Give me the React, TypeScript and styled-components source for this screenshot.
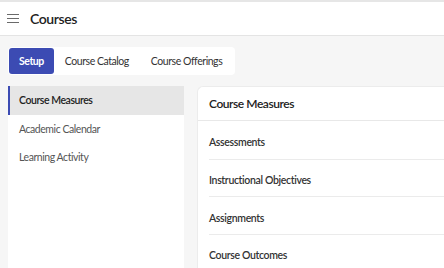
import React, { useState } from 'react'
import styled, { createGlobalStyle } from 'styled-components'

const GlobalStyle = createGlobalStyle`
  html, body {
    margin: 0;
    padding: 0;
    background: #f6f6f6;
    font-family: Lato, "Open Sans", Arial, sans-serif;
    color: #222;
    overflow: hidden;
  }
`

const Page = styled.div`
  width: 444px;
  height: 268px;
  display: flex;
  flex-direction: column;
  border-top: 2px solid #e6e6e6;
  box-sizing: border-box;
`

const Header = styled.header`
  height: 33px;
  flex: none;
  display: flex;
  align-items: center;
  gap: 11px;
  padding: 0 7px;
  background: #fff;
  border-bottom: 1px solid #e4e4e4;
`

const MenuIcon = styled.span`
  display: flex;
  flex-direction: column;
  justify-content: space-between;
  width: 12px;
  height: 10px;
  span {
    height: 1.3px;
    background: #6a6a6a;
  }
`

const Title = styled.h1`
  margin: 0;
  font-size: 14px;
  font-weight: 600;
  color: #222;
  letter-spacing: -0.4px;
`

const Body = styled.main`
  flex: 1;
  display: flex;
  flex-direction: column;
  padding: 11px 0 0 8px;
  gap: 11px;
  min-height: 0;
`

const TabBar = styled.nav`
  align-self: flex-start;
  display: flex;
  align-items: center;
  background: #fff;
  border-radius: 4px;
  padding: 1px 2px 1px 1px;
`

const Tab = styled.button<{ active?: boolean }>`
  border: none;
  font-family: inherit;
  font-size: 10.5px;
  letter-spacing: -0.45px;
  height: 26px;
  padding: 0 ${({ active }) => (active ? '10px' : '11px')};
  border-radius: 3px;
  cursor: pointer;
  background: ${({ active }) => (active ? '#3c4bb3' : 'transparent')};
  color: ${({ active }) => (active ? '#fff' : '#333')};
  font-weight: ${({ active }) => (active ? 700 : 400)};
`

const Columns = styled.div`
  flex: 1;
  display: flex;
  gap: 13px;
  min-height: 0;
`

const Sidebar = styled.aside`
  width: 176px;
  flex: none;
  background: #fff;
  display: flex;
  flex-direction: column;
`

const SideItem = styled.div<{ active?: boolean }>`
  height: 28.5px;
  flex: none;
  display: flex;
  align-items: center;
  padding-left: ${({ active }) => (active ? '9px' : '11px')};
  border-left: ${({ active }) => (active ? '2px solid #3c4bb3' : 'none')};
  background: ${({ active }) => (active ? '#e6e6e6' : 'transparent')};
  font-size: 10.5px;
  letter-spacing: -0.45px;
  font-weight: ${({ active }) => (active ? 600 : 400)};
  color: ${({ active }) => (active ? '#222' : '#555')};
  cursor: pointer;
`

const Card = styled.section`
  flex: 1;
  background: #fff;
  border: 1px solid #ececec;
  border-right: none;
  border-bottom: none;
  border-top-left-radius: 6px;
  display: flex;
  flex-direction: column;
`

const CardHeader = styled.div`
  height: 33px;
  flex: none;
  display: flex;
  align-items: center;
  padding-left: 11px;
  border-bottom: 1px solid #e8e8e8;
  font-size: 12px;
  letter-spacing: -0.45px;
  font-weight: 600;
  color: #222;
`

const CardList = styled.ul`
  list-style: none;
  margin: 0;
  padding: 0 0 0 11px;
`

const CardItem = styled.li`
  height: 37.5px;
  padding-top: 5px;
  display: flex;
  align-items: center;
  font-size: 10.5px;
  letter-spacing: -0.35px;
  font-weight: 600;
  color: #333;
  box-sizing: border-box;
  & + & {
    border-top: 1px solid #ebebeb;
  }
`

const tabs = ['Setup', 'Course Catalog', 'Course Offerings']
const sideItems = ['Course Measures', 'Academic Calendar', 'Learning Activity']
const measures = ['Assessments', 'Instructional Objectives', 'Assignments', 'Course Outcomes']

export default function App() {
  const [tab, setTab] = useState('Setup')
  const [side, setSide] = useState('Course Measures')
  return (
    <>
      <GlobalStyle />
      <Page>
        <Header>
          <MenuIcon>
            <span />
            <span />
            <span />
          </MenuIcon>
          <Title>Courses</Title>
        </Header>
        <Body>
          <TabBar>
            {tabs.map((t) => (
              <Tab key={t} active={t === tab} onClick={() => setTab(t)}>
                {t}
              </Tab>
            ))}
          </TabBar>
          <Columns>
            <Sidebar>
              {sideItems.map((s) => (
                <SideItem key={s} active={s === side} onClick={() => setSide(s)}>
                  {s}
                </SideItem>
              ))}
            </Sidebar>
            <Card>
              <CardHeader>Course Measures</CardHeader>
              <CardList>
                {measures.map((m) => (
                  <CardItem key={m}>{m}</CardItem>
                ))}
              </CardList>
            </Card>
          </Columns>
        </Body>
      </Page>
    </>
  )
}
